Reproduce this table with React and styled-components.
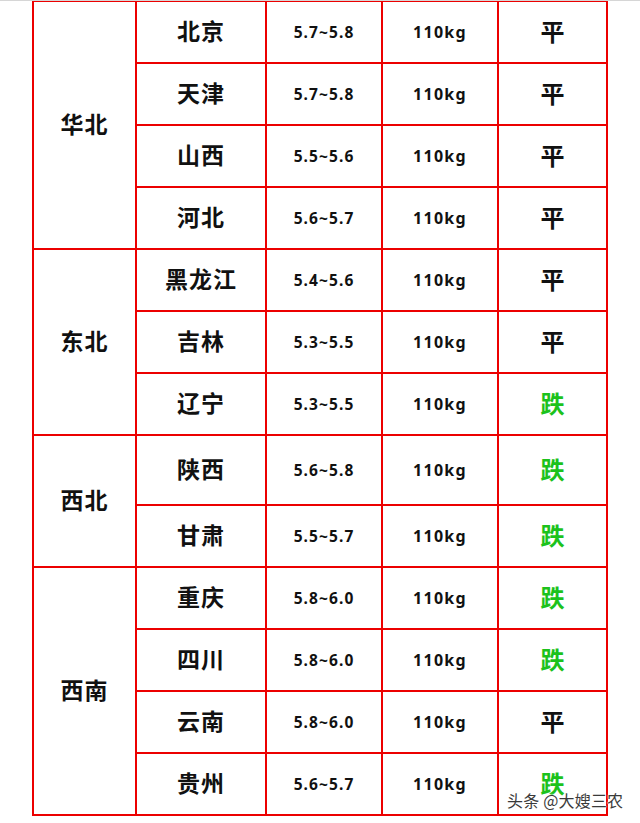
import React from "react";
import styled, { createGlobalStyle } from "styled-components";

const GlobalStyle = createGlobalStyle`
  html, body { margin: 0; padding: 0; background: #ffffff; }
  body { font-family: "Noto Sans", "Noto Sans CJK SC", sans-serif; }
`;

const Page = styled.div`
  position: relative;
  width: 640px;
  height: 823px;
  overflow: hidden;
  background: #fff;
  border-top: 1px solid #d6d6d6;
  box-sizing: border-box;
`;

const Table = styled.table`
  margin-left: 32px;
  margin-top: -1px;
  border-collapse: collapse;
  table-layout: fixed;
  width: 576px;
`;

const Col = styled.col`
  width: ${(p) => p.$w}px;
`;

const Cell = styled.td`
  border: 2px solid #ec0000;
  padding: 0 0 4px 0;
  text-align: center;
  vertical-align: middle;
  color: #111;
`;

const Row = styled.tr`
  height: ${(p) => p.$h || 62}px;
`;

const NameCell = styled(Cell)`
  font-family: "Noto Sans CJK SC", sans-serif;
  font-weight: 700;
  font-size: 23px;
  letter-spacing: 1px;
`;

const RangeCell = styled(Cell)`
  padding-bottom: 1px;
  font-family: "Noto Sans", sans-serif;
  font-weight: 700;
  font-size: 15.5px;
  letter-spacing: 1.1px;
`;

const WeightCell = styled(Cell)`
  padding-bottom: 1px;
  font-family: "Noto Sans", sans-serif;
  font-weight: 700;
  font-size: 16px;
  letter-spacing: 1.3px;
`;

const TrendCell = styled(Cell)`
  font-family: "Noto Sans CJK SC", sans-serif;
  font-weight: 700;
  font-size: 24px;
  color: ${(p) => (p.$down ? "#1cc21c" : "#111")};
`;

const Watermark = styled.div`
  position: absolute;
  left: 507px;
  top: 787px;
  font-family: "Noto Sans CJK SC", sans-serif;
  font-size: 16px;
  font-weight: 400;
  color: #3a3a3a;
  letter-spacing: 0.2px;
  text-shadow: 0 0 2px #fff, 0 0 2px #fff, 0 0 1px #fff;
  white-space: nowrap;
`;

const columns = [103, 130, 116, 116, 109];

const groups = [
  {
    region: "华北",
    rows: [
      ["北京", "5.7~5.8", "平"],
      ["天津", "5.7~5.8", "平"],
      ["山西", "5.5~5.6", "平"],
      ["河北", "5.6~5.7", "平"],
    ],
  },
  {
    region: "东北",
    rows: [
      ["黑龙江", "5.4~5.6", "平"],
      ["吉林", "5.3~5.5", "平"],
      ["辽宁", "5.3~5.5", "跌"],
    ],
  },
  {
    region: "西北",
    rows: [
      ["陕西", "5.6~5.8", "跌", 70],
      ["甘肃", "5.5~5.7", "跌"],
    ],
  },
  {
    region: "西南",
    rows: [
      ["重庆", "5.8~6.0", "跌"],
      ["四川", "5.8~6.0", "跌"],
      ["云南", "5.8~6.0", "平"],
      ["贵州", "5.6~5.7", "跌"],
    ],
  },
];

export default function App() {
  return (
    <>
      <GlobalStyle />
      <Page>
        <Table>
          <colgroup>
            {columns.map((w, i) => (
              <Col key={i} $w={w} />
            ))}
          </colgroup>
          <tbody>
            {groups.map((g) =>
              g.rows.map(([city, range, trend, h], i) => (
                <Row key={city} $h={h}>
                  {i === 0 && (
                    <NameCell rowSpan={g.rows.length}>{g.region}</NameCell>
                  )}
                  <NameCell>{city}</NameCell>
                  <RangeCell>{range}</RangeCell>
                  <WeightCell>110kg</WeightCell>
                  <TrendCell $down={trend === "跌"}>{trend}</TrendCell>
                </Row>
              ))
            )}
          </tbody>
        </Table>
        <Watermark>头条 @大嫂三农</Watermark>
      </Page>
    </>
  );
}
